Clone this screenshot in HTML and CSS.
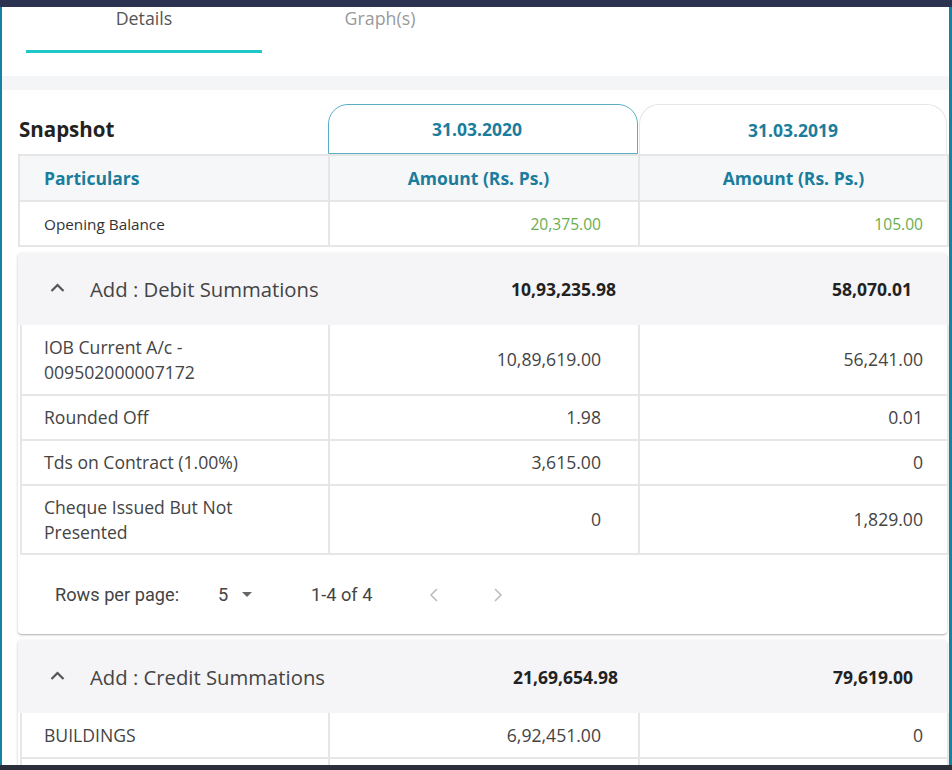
FILE: index.html
```html
<!DOCTYPE html>
<html>
<head>
<meta charset="utf-8">
<link rel="stylesheet" href="styles.css">
</head>
<body>
<div class="topbar"></div>
<div class="frame">
  <div class="tabs">
    <div class="tab active">Details</div>
    <div class="tab">Graph(s)</div>
  </div>
  <div class="band"></div>
  <div class="content">
    <div class="snaprow">
      <div class="snap-title">Snapshot</div>
      <div class="date-tab current">31.03.2020</div>
      <div class="date-tab other">31.03.2019</div>
    </div>
    <table class="grid head-table">
      <colgroup><col class="c1"><col class="c2"><col class="c3"></colgroup>
      <tr class="hdr">
        <th class="left">Particulars</th>
        <th class="mid">Amount (Rs. Ps.)</th>
        <th>Amount (Rs. Ps.)</th>
      </tr>
      <tr class="opening">
        <td class="label">Opening Balance</td>
        <td class="num green v2">20,375.00</td>
        <td class="num green v3">105.00</td>
      </tr>
    </table>

    <div class="card">
      <div class="card-head">
        <div class="ch-title">
          <svg class="chev" width="15" height="10" viewBox="0 0 15 10"><polyline points="1.5,8 7.5,2 13.5,8" fill="none" stroke="#555" stroke-width="2.2"/></svg>
          <span>Add : Debit Summations</span>
        </div>
        <div class="ch-val v2">10,93,235.98</div>
        <div class="ch-val v3">58,070.01</div>
      </div>
      <table class="grid inner">
        <colgroup><col class="i1"><col class="c2"><col class="c3"></colgroup>
        <tr class="tall first"><td class="label">IOB Current A/c -<br>009502000007172</td><td class="num v2">10,89,619.00</td><td class="num v3">56,241.00</td></tr>
        <tr><td class="label">Rounded Off</td><td class="num v2">1.98</td><td class="num v3">0.01</td></tr>
        <tr><td class="label">Tds on Contract (1.00%)</td><td class="num v2">3,615.00</td><td class="num v3">0</td></tr>
        <tr class="tall"><td class="label">Cheque Issued But Not<br>Presented</td><td class="num v2">0</td><td class="num v3">1,829.00</td></tr>
      </table>
      <div class="pager">
        <span class="rpp">Rows per page:</span>
        <span class="sel">5
          <svg width="10" height="5" viewBox="0 0 10 5"><polygon points="0,0 10,0 5,5" fill="#666"/></svg>
        </span>
        <span class="range">1-4 of 4</span>
        <svg class="pg prev" width="10" height="16" viewBox="0 0 10 16"><polyline points="8,2 2,8 8,14" fill="none" stroke="#bdbdbd" stroke-width="1.6"/></svg>
        <svg class="pg next" width="10" height="16" viewBox="0 0 10 16"><polyline points="2,2 8,8 2,14" fill="none" stroke="#bdbdbd" stroke-width="1.6"/></svg>
      </div>
    </div>

    <div class="card second">
      <div class="card-head">
        <div class="ch-title">
          <svg class="chev" width="15" height="10" viewBox="0 0 15 10"><polyline points="1.5,8 7.5,2 13.5,8" fill="none" stroke="#555" stroke-width="2.2"/></svg>
          <span>Add : Credit Summations</span>
        </div>
        <div class="ch-val v2b">21,69,654.98</div>
        <div class="ch-val v3b">79,619.00</div>
      </div>
      <table class="grid inner">
        <colgroup><col class="i1"><col class="c2"><col class="c3"></colgroup>
        <tr class="bld"><td class="label">BUILDINGS</td><td class="num v2">6,92,451.00</td><td class="num v3">0</td></tr>
        <tr><td class="label">&nbsp;</td><td class="num v2">&nbsp;</td><td class="num v3">&nbsp;</td></tr>
      </table>
    </div>
  </div>
</div>
<div class="bottombar"></div>
</body>
</html>
```
FILE: styles.css
```css
* { box-sizing: border-box; }
html, body { margin: 0; padding: 0; background: #fff; }
body {
  font-family: "Open Sans", "Liberation Sans", sans-serif;
  color: #333;
  width: 952px;
  height: 770px;
  overflow: hidden;
}
.topbar { height: 7px; background: #2c3350; }
.bottombar { height: 5px; background: #2a2f3a; }
.frame {
  height: 758px;
  border-left: 2px solid #1582a4;
  border-right: 3px solid #1582a4;
  overflow: hidden;
}
.tabs {
  display: flex;
  padding-left: 24px;
  height: 69px;
}
.tab {
  width: 236px;
  height: 46px;
  text-align: center;
  font-size: 17.8px;
  line-height: 22px;
  color: #9a9a9a;
  border-bottom: 3px solid transparent;
}
.tab.active { color: #555; border-bottom-color: #1fc7c9; }
.band { height: 14px; background: #f4f5f7; }
.content { padding: 0 0 0 16px; }

.snaprow {
  display: grid;
  grid-template-columns: 310px 310px 309px;
  height: 64px;
  align-items: end;
}
.snap-title {
  font-size: 20.5px;
  font-weight: 700;
  color: #222;
  line-height: 26px;
  padding: 0 0 12px 1px;
}
.date-tab {
  height: 50px;
  display: flex;
  align-items: center;
  justify-content: center;
  font-size: 17.5px;
  font-weight: 700;
  color: #1b7d9c;
  border-radius: 20px 20px 0 0;
}
.date-tab.current { border: 1px solid #5aaec4; padding-right: 12px; }
.date-tab.other { border: 1px solid #e6e6e6; border-bottom: none; margin-left: 1px; }

table.grid {
  border-collapse: collapse;
  table-layout: fixed;
  width: 929px;
}
col.c1 { width: 310px; }
col.i1 { width: 308px; }
col.c2 { width: 310px; }
col.c3 { width: 309px; }
table.grid td, table.grid th {
  border: 2px solid #e6e6e6;
  padding: 0;
}
.hdr th {
  height: 46px;
  background: #f6f7f9;
  color: #1b7d9c;
  font-size: 17.5px;
  font-weight: 700;
  text-align: center;
}
.hdr th.mid { padding-right: 11px; }
.hdr th.left { text-align: left; padding-left: 24px; }
.opening td { height: 45px; }
.opening td.label { font-size: 15.3px; color: #333; padding-left: 24px; }
.num { text-align: right; }
.green { color: #6aae4f; font-size: 15.6px; }
.v2 { padding-right: 37px !important; }
.v3 { padding-right: 24px !important; }

.card {
  margin-top: 6px;
  width: 929px;
  border-radius: 4px;
  background: #fff;
  box-shadow: 0 1px 3px rgba(0,0,0,0.22), 0 1px 1px rgba(0,0,0,0.12);
}
.card.second { margin-top: 6px; }
.card-head {
  display: grid;
  grid-template-columns: 310px 310px 309px;
  height: 72px;
  align-items: center;
  background: #f5f5f7;
  border-radius: 4px 4px 0 0;
}
.second .card-head { height: 73px; }
.ch-title {
  display: flex;
  align-items: center;
  padding-left: 32px;
  font-size: 20.3px;
  color: #444;
}
.ch-title .chev { margin-right: 25px; margin-top: -2px; }
.ch-val {
  text-align: right;
  font-size: 17.5px;
  font-weight: 700;
  color: #222;
}
.ch-val.v2 { padding-right: 22px !important; }
.ch-val.v3 { padding-right: 35px !important; }
.ch-val.v2b { padding-right: 20px; }
.ch-val.v3b { padding-right: 34px; }

table.inner { margin-left: 2px; width: 927px; }
table.inner td { height: 45px; font-size: 17.6px; color: #444; line-height: 25px; }
table.inner tr.tall td { height: 69px; }
table.inner tr.tall.first td { height: 70px; }
table.inner tr.bld td { height: 45px; }
table.inner td.label { padding-left: 22px; }
table.inner tr:first-child td { border-top: none; }

.pager {
  height: 79px;
  display: flex;
  align-items: center;
  padding-left: 37px;
  font-family: Roboto, "Liberation Sans", sans-serif;
  font-size: 18.2px;
  color: #444;
}
.rpp { width: 163px; }
.sel { display: inline-flex; align-items: center; width: 93px; }
.sel svg { margin-left: 14px; }
.range { width: 118px; }
.pg.next { margin-left: 54px; }
```
